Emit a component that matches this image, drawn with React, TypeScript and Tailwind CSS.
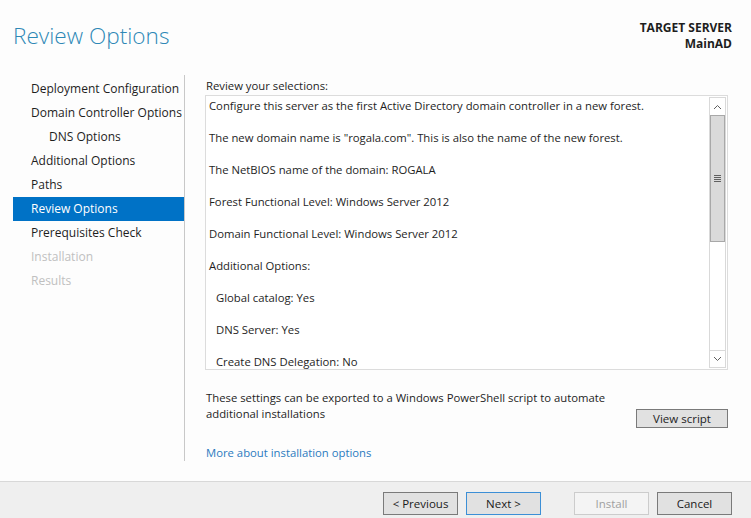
const navItems = [
  { label: 'Deployment Configuration', state: 'done' },
  { label: 'Domain Controller Options', state: 'done' },
  { label: 'DNS Options', state: 'done', sub: true },
  { label: 'Additional Options', state: 'done' },
  { label: 'Paths', state: 'done' },
  { label: 'Review Options', state: 'active' },
  { label: 'Prerequisites Check', state: 'done' },
  { label: 'Installation', state: 'off' },
  { label: 'Results', state: 'off' },
]

const reviewLines = [
  { text: 'Configure this server as the first Active Directory domain controller in a new forest.' },
  { text: 'The new domain name is "rogala.com". This is also the name of the new forest.' },
  { text: 'The NetBIOS name of the domain: ROGALA' },
  { text: 'Forest Functional Level: Windows Server 2012' },
  { text: 'Domain Functional Level: Windows Server 2012' },
  { text: 'Additional Options:' },
  { text: 'Global catalog: Yes', indent: true },
  { text: 'DNS Server: Yes', indent: true },
  { text: 'Create DNS Delegation: No', indent: true },
]

function WizButton({ label, variant }: { label: string; variant?: 'focus' | 'disabled' }) {
  const base = 'w-[75px] h-[23px] text-[11.5px] flex items-center justify-center border'
  if (variant === 'disabled')
    return <div className={`${base} border-[#cccccc] bg-[#f4f4f4] text-[#a0a0a0]`}>{label}</div>
  if (variant === 'focus')
    return <div className={`${base} border-[#3c8fd6] bg-[#e1e1e1] text-[#1a1a1a]`}>{label}</div>
  return <div className={`${base} border-[#7a7a7a] bg-[#e1e1e1] text-[#1a1a1a]`}>{label}</div>
}

export default function App() {
  return (
    <div
      className="w-[751px] h-[518px] bg-[#fdfdfd] flex flex-col overflow-hidden text-[#1e1e1e]"
      style={{ fontFamily: '"Open Sans", "Noto Sans", sans-serif' }}
    >
      <div className="flex justify-between pl-[13px] pr-[19px] pt-[19px] h-[75px]">
        <h1 className="text-[22.6px] leading-[34px] text-[#2e88b6] font-light">Review Options</h1>
        <div className="text-right text-[12px] font-bold leading-[16px] pt-[1px]">
          <div>TARGET SERVER</div>
          <div>MainAD</div>
        </div>
      </div>

      <div className="flex flex-1">
        <div className="w-[172px] ml-[13px] border-r border-[#c8c8c8] h-[386px] pt-[2px]">
          {navItems.map((item) => (
            <div
              key={item.label}
              className={`h-[24px] flex items-center text-[12px] whitespace-nowrap ${item.sub ? 'pl-[36px]' : 'pl-[18px]'} ${
                item.state === 'active'
                  ? 'bg-[#0072c6] text-white'
                  : item.state === 'off'
                    ? 'text-[#c0c0c0]'
                    : 'text-[#1e1e1e]'
              }`}
            >
              {item.label}
            </div>
          ))}
        </div>

        <div className="flex-1 pl-[20px] pr-[23px]">
          <div className="text-[11.3px] leading-[20px] pl-px pt-px">Review your selections:</div>
          <div className="h-[275px] border border-[#dcdcdc] bg-white flex -mt-px">
            <div className="flex-1 pl-[3px] pt-[1px] text-[11.3px]">
              {reviewLines.map((line) => (
                <div key={line.text} className={`h-[32px] leading-[18px] whitespace-nowrap ${line.indent ? 'pl-[7px]' : ''}`}>
                  {line.text}
                </div>
              ))}
            </div>
            <div className="w-[17px] my-px mr-px border border-[#d9d9d9] flex flex-col">
              <div className="h-[17px] flex items-center justify-center">
                <svg width="9" height="6" viewBox="0 0 9 6" fill="none" stroke="#606060" strokeWidth="1">
                  <path d="M1 5 L4.5 1.5 L8 5" />
                </svg>
              </div>
              <div className="h-[127px] bg-[#dadada] border border-[#a8a8a8] flex items-center justify-center">
                <div className="flex flex-col gap-[1px]">
                  <div className="w-[7px] h-px bg-[#606060]" />
                  <div className="w-[7px] h-px bg-[#606060]" />
                  <div className="w-[7px] h-px bg-[#606060]" />
                  <div className="w-[7px] h-px bg-[#606060]" />
                </div>
              </div>
              <div className="flex-1" />
              <div className="h-[17px] flex items-center justify-center border-t border-[#d9d9d9]">
                <svg width="9" height="6" viewBox="0 0 9 6" fill="none" stroke="#606060" strokeWidth="1">
                  <path d="M1 1 L4.5 4.5 L8 1" />
                </svg>
              </div>
            </div>
          </div>

          <div className="flex justify-between mt-[20px] pl-px">
            <div className="text-[11.3px] leading-[16px] w-[410px]">
              These settings can be exported to a Windows PowerShell script to automate additional installations
            </div>
            <div className="self-end w-[92px] h-[19px] border border-[#7a7a7a] bg-[#e1e1e1] text-[11.5px] flex items-center justify-center -mb-[6px]">
              View script
            </div>
          </div>

          <div className="mt-[23px] pl-px text-[11.3px] text-[#2b7bbf]">More about installation options</div>
        </div>
      </div>

      <div className="h-[37px] border-t border-[#d8d8d8] bg-[#efefef] flex items-start justify-end pr-[19px] pt-[10px]">
        <div className="flex gap-[8px]">
          <WizButton label="< Previous" />
          <WizButton label="Next >" variant="focus" />
        </div>
        <div className="flex gap-[8px] ml-[33px]">
          <WizButton label="Install" variant="disabled" />
          <WizButton label="Cancel" />
        </div>
      </div>
    </div>
  )
}
